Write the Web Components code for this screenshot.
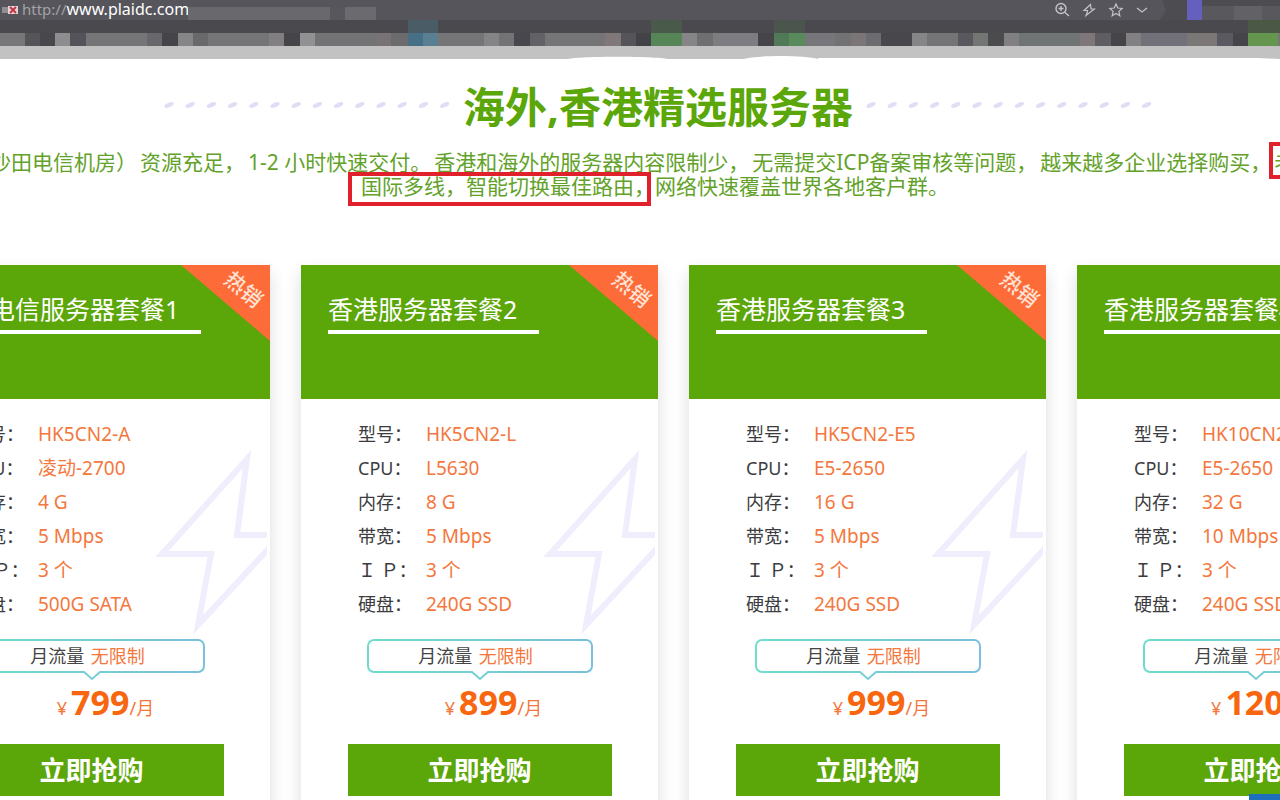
<!DOCTYPE html>
<html lang="zh-CN">
<head>
<meta charset="utf-8">
<title>海外,香港精选服务器</title>
<style>
html,body{margin:0;height:100%;overflow:hidden;background:#fff}
body{font-family:"Noto Sans","Noto Sans CJK SC",sans-serif}
</style>
</head>
<body>
<server-page></server-page>
<script>
const define = (name, html, setup) => customElements.define(name, class extends HTMLElement {
  connectedCallback() {
    if (this.shadowRoot) return;
    const root = this.attachShadow({mode: 'open'});
    root.innerHTML = html;
    if (setup) setup(this, root);
  }
});

define('browser-bar', `
<style>
:host{display:block;background:#c2c2c2;height:59px;position:relative;overflow:hidden}
.address{display:flex;align-items:center;height:20px;background:#56555b;overflow:hidden}
.fav{width:16px;height:12px;margin:0 4px 0 2px;flex:none}
a{display:block;width:166px;overflow:hidden;white-space:nowrap;color:#fff;font-size:16px;line-height:18px;height:20px;text-decoration:none}
a span{color:#a3a2a6;font-size:15px}
.blur{width:188px;height:13px;align-self:flex-end;background:linear-gradient(90deg,#69686d 0 142px,#58575d 142px 157px,#6b6a6f 157px)}
.icons{display:flex;align-items:center;gap:12px;margin-left:auto;color:#c4c3c8}
.icons svg{display:block;fill:none;stroke:currentColor}
.tail{width:120px;height:20px;flex:none;margin-left:12px}
.strip{display:block;width:100%;height:26px}
.edge{display:block;width:100%;height:13px}
</style>
<div class="address">
 <svg class="fav" viewBox="0 0 16 12"><path fill="#8f8e94" d="M0 3h7v6H0z"/><path fill="#e9d5d8" d="M6 2h10v8H6z"/><path stroke="#c03845" stroke-width="2" d="M8 3l6 6M14 3L8 9"/></svg>
 <a href="#"><span>http://</span>www.plaidc.com</a>
 <div class="blur"></div>
 <div class="icons">
  <svg width="16" height="16" viewBox="0 0 16 16" stroke-width="1.4"><circle cx="7" cy="6.500" r="5"/><path d="M11 10.500l4 3.500M4.500 6.500h5M7 4v5"/></svg>
  <svg width="14" height="14" viewBox="0 0 14 14" stroke-width="1.200"><path d="M8.500 1.500L2 7.500h3.500v1L4 12.500l8.500-6.500H9V5z"/></svg>
  <svg width="16" height="16" viewBox="0 0 16 16" stroke-width="1.200"><path d="M8 2l1.800 4 4.400.5-3.300 2.900.9 4.300L8 11.500l-3.800 2.200.9-4.300L1.800 6.500l4.400-.5z"/></svg>
  <svg width="12" height="8" viewBox="0 0 12 8" stroke-width="1.200"><path d="M1 2l5 4 5-4"/></svg>
 </div>
 <svg class="tail" viewBox="0 0 120 20"><path fill="#4d4c51" d="M2 0h118v20H0l6-10z"/><path fill="#6560bd" d="M27 0h15v20H27z"/><path fill="#59585d" d="M42 6h78v14H42z"/><path fill="#626165" d="M74 6h28v14H74z"/></svg>
</div>
<svg class="strip" viewBox="0 0 1280 26" preserveAspectRatio="none" shape-rendering="crispEdges"></svg>
<svg class="edge" viewBox="0 0 1280 13" preserveAspectRatio="none"><path fill="#fff" d="M568 13c12-3 86-3 100 0zM744 13c14-4 60-4 74 0zM818 12h440l22 1H818z"/></svg>`,
(host, root) => {
  const blocks = [[0,'#777679'],[25,'#555459'],[40,'#48474b'],[55,'#8d8c8f'],[70,'#535359'],[86,'#757477'],[147,'#68676b'],[162,'#454449'],[178,'#858487'],[193,'#69686b'],[208,'#757477'],[269,'#817f82'],[284,'#454449'],[300,'#919092'],[315,'#737275'],[376,'#797274'],[391,'#6b6a6d'],[408,'#477087'],[423,'#5a7f92'],[438,'#757477'],[484,'#848386'],[499,'#737275'],[514,'#48474d'],[530,'#626166'],[545,'#757477'],[605,'#807778'],[621,'#555458'],[636,'#434247'],[651,'#568658'],[682,'#858487'],[697,'#6f6e71'],[713,'#7d7c80'],[758,'#454449'],[774,'#527957'],[789,'#588a5c'],[805,'#77767b'],[835,'#727174'],[851,'#7c7577'],[866,'#6c6b6f'],[881,'#48474b'],[912,'#858487'],[927,'#747376'],[958,'#59585e'],[973,'#737573'],[988,'#4b4a4d'],[1004,'#807f81'],[1019,'#717474'],[1080,'#7f7679'],[1095,'#5e5d61'],[1111,'#454449'],[1126,'#828083'],[1141,'#72717a'],[1187,'#7c7777'],[1217,'#5a5961'],[1233,'#454449'],[1248,'#65964f'],[1278,'#777']];
  let s = '<rect width="1280" height="13" fill="#4a494e"/><rect x="408" width="30" height="13" fill="#4a5c66"/><rect x="651" width="31" height="13" fill="#495a4b"/><rect x="774" width="31" height="13" fill="#4b544d"/><rect x="1248" width="32" height="13" fill="#4b5845"/>';
  blocks.forEach(([x, c], i) => s += `<rect x="${x}" y="13" width="${(blocks[i + 1] || [1280])[0] - x}" height="13" fill="${c}"/>`);
  root.querySelector('.strip').innerHTML = s;
});

define('page-intro', `
<style>
:host{display:block;color:#5ba608;padding:20px 0 67px}
.head{display:flex;align-items:center;justify-content:center;gap:12px;padding-left:36px}
h2{margin:0;font-size:42px;line-height:56px;font-weight:700;white-space:nowrap}
svg{display:block;width:288px;height:10px;flex:none;margin-bottom:4px}
p{margin:15px 0 0;font-size:21px;line-height:24px;color:#62a229}
.line{display:flex;justify-content:center;white-space:pre}
.line.first{justify-content:flex-start;gap:3px;margin-left:-10px}
.line.second{padding-left:30px}
mark{background:none;color:inherit;position:relative}
mark::after{content:"";position:absolute;border:4px solid #e0202b;pointer-events:none}
.first mark::after{inset:-8px -8px -5px -5px}
.second mark::after{inset:-2px 4px -8px -13px}
</style>
<div class="head">
<svg viewBox="0 0 288 10"></svg><h2>海外,香港精选服务器</h2><svg viewBox="0 0 288 10"></svg></div>
<p><span class="line first"><span>沙田电信机房）</span><span>资源充足，</span><span>1-2 小时快速交付。</span><span>香港和海外的服务器内容限制少，</span><span>无需提交ICP备案审核等问题，</span><span>越来越多企业选择购买，</span><mark>老</mark></span><span class="line second"><mark>国际多线，智能切换最佳路由，</mark>网络快速覆盖世界各地客户群。</span></p>`,
(host, root) => {
  const dots = Array.from({length: 14}, (_, i) => `<ellipse cx="${6 + i * 21.2}" cy="5" rx="5" ry="2.200" fill="#dedff5" transform="rotate(-25 ${6 + i * 21.2} 5)"/>`).join('');
  root.querySelectorAll('svg').forEach(s => s.innerHTML = dots);
});

define('plan-card', `
<style>
:host{display:block;background:#fff;box-shadow:0 8px 16px rgba(0,0,0,.14);position:relative;padding-bottom:60px}
header{background:#5ba608;color:#fff;height:134px;box-sizing:border-box;padding:28px 27px 0}
h3{display:inline-block;margin:0;padding:0 22px 5px 0;border-bottom:4px solid #fff;font-size:25px;line-height:32px;font-weight:400;white-space:nowrap}
.hot{position:absolute;top:0;right:0;width:89px;height:76px;background:#fd6b38;clip-path:polygon(0 0,100% 0,100% 100%);color:#ffe3d6}
.hot span{position:absolute;left:42px;top:12px;font-size:21px;line-height:24px;font-weight:500;transform:rotate(40deg);white-space:nowrap}
.bolt{position:absolute;top:175px;right:3px;width:116px;height:200px;fill:none;stroke:#f0eefd;stroke-width:6;stroke-miterlimit:10}
.body{position:relative;padding-top:18px}
dl{margin:0 0 18px;padding-left:57px;display:grid;grid-template-columns:68px 1fr;grid-auto-rows:34px;align-items:center;font-size:19px;line-height:34px;white-space:nowrap}
dt{color:#3c3c40;font-size:18px}
dd{margin:0;color:#f4773d}
.flow{position:relative;width:226px;height:34px;box-sizing:border-box;padding-right:8px;margin:0 auto;font-size:18px;line-height:34px;text-align:center;color:#444}
.flow svg{position:absolute;left:0;top:0;width:226px;height:42px;fill:#fff;stroke-width:2}
.flow span{position:relative}
.flow b{font-weight:400;color:#f4773d;margin-left:2px}
.price{height:71px;box-sizing:border-box;padding:10px 0 0 28px;display:flex;justify-content:center;align-items:baseline;color:#f4773d;font-size:18px;line-height:38px}
.price strong{font-size:34px;color:#f86610;margin-left:4px}
button{display:block;width:264px;height:52px;margin:0 auto;border:0;background:#5ba608;color:#fff;font:700 26px/52px "Noto Sans","Noto Sans CJK SC",sans-serif;padding:0}
</style>
<header><h3><slot></slot></h3></header>
<div class="hot"><span>热销</span></div>
<svg class="bolt" viewBox="0 0 116 200"><path d="M120 95H86L96 19L11 114H60L47 185L120 106"/></svg>
<div class="body">
<dl></dl>
<div class="flow"><svg viewBox="0 0 226 42"><defs><linearGradient id="g"><stop stop-color="#70ddcb"/><stop offset="1" stop-color="#79c0dc"/></linearGradient></defs><path stroke="url(#g)" d="M7 1H219a6 6 0 0 1 6 6V27a6 6 0 0 1-6 6H121L113 40L105 33H7a6 6 0 0 1-6-6V7a6 6 0 0 1 6-6z"/></svg><span>月流量 <b>无限制</b></span></div>
<div class="price"><span>¥</span><strong></strong><span>/月</span></div>
<button type="button">立即抢购</button>
</div>`,
(host, root) => {
  const labels = ['型号：', 'CPU：', '内存：', '带宽：', 'Ｉ Ｐ：', '硬盘：'];
  const values = host.getAttribute('specs').split('|');
  root.querySelector('dl').innerHTML = labels.map((l, i) => `<dt>${l}</dt><dd>${values[i]}</dd>`).join('');
  root.querySelector('strong').textContent = host.getAttribute('price');
});

define('server-page', `
<style>
:host{display:block;position:relative;height:100vh;overflow:hidden}
.plans{display:grid;grid-template-columns:repeat(4,357px);gap:31px;margin-left:-87px}
.chat{position:fixed;right:0;bottom:0;width:31px;height:6px;background:#1d6fbd}
</style>
<browser-bar></browser-bar>
<page-intro></page-intro>
<div class="plans">
<plan-card price="799" specs="HK5CN2-A|凌动-2700|4 G|5 Mbps|3 个|500G SATA">香港电信服务器套餐1</plan-card>
<plan-card price="899" specs="HK5CN2-L|L5630|8 G|5 Mbps|3 个|240G SSD">香港服务器套餐2</plan-card>
<plan-card price="999" specs="HK5CN2-E5|E5-2650|16 G|5 Mbps|3 个|240G SSD">香港服务器套餐3</plan-card>
<plan-card price="1200" specs="HK10CN2-E5|E5-2650|32 G|10 Mbps|3 个|240G SSD">香港服务器套餐4</plan-card>
</div>
<div class="chat"></div>`);
</script>
</body>
</html>
